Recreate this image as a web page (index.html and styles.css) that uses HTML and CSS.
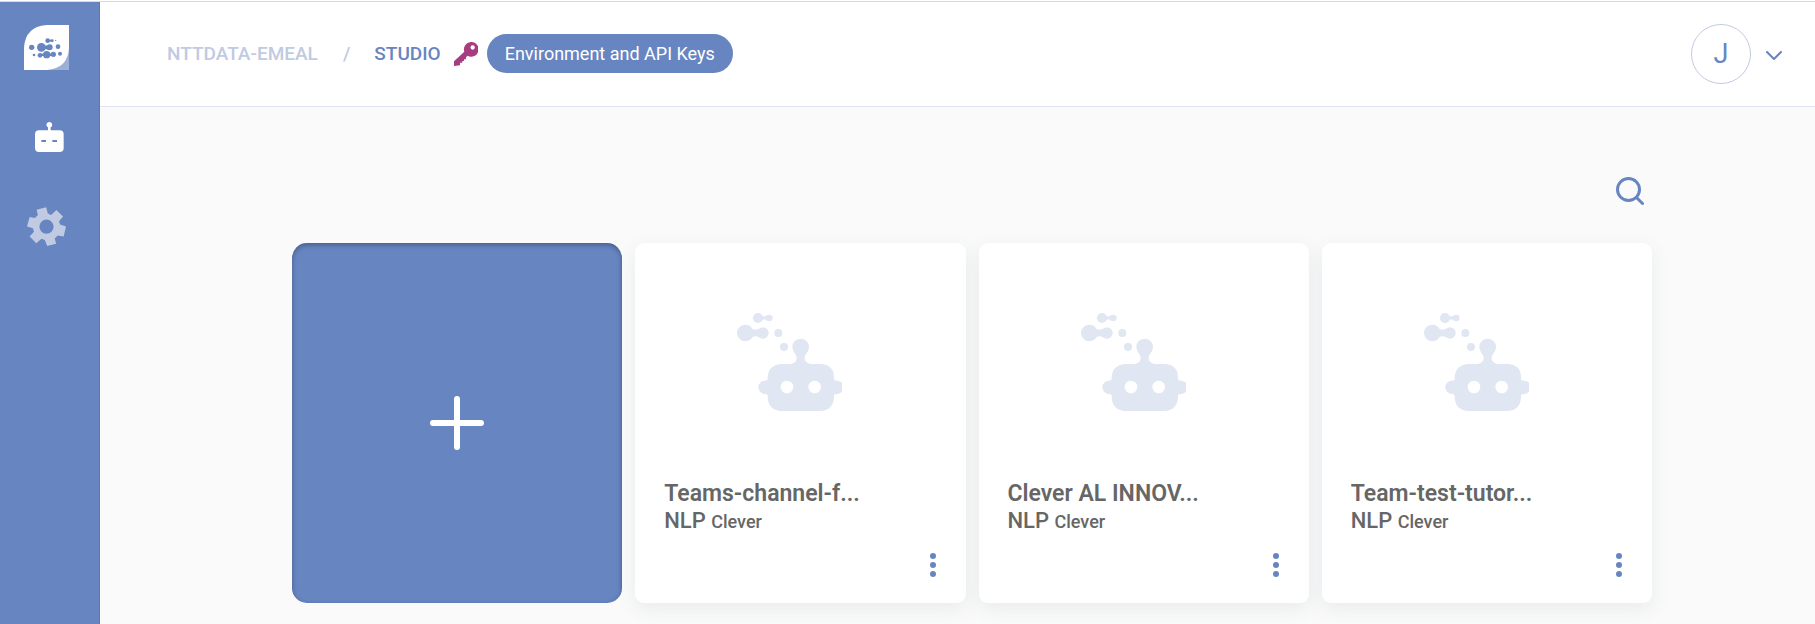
FILE: index.html
```html
<!DOCTYPE html>
<html lang="en">
<head>
<meta charset="utf-8">
<title>Studio</title>
<link rel="stylesheet" href="styles.css">
</head>
<body>
<svg class="defs" aria-hidden="true">
  <symbol id="bot" viewBox="51 69 315 294">
    <circle cx="114" cy="84" r="15"/><circle cx="148" cy="84" r="10"/>
    <path d="M120 73C127 82 135 80 143 76V92C135 88 127 86 120 95Z"/>
    <circle cx="76" cy="129" r="25"/><circle cx="129" cy="129" r="17"/>
    <path d="M88 108C98 124 110 120 121 115V143C110 138 98 134 88 150Z"/>
    <circle cx="175" cy="129" r="12"/><circle cx="192" cy="171" r="12"/>
    <circle cx="242" cy="171" r="25"/>
    <path d="M220 182C230 197 233 204 227 214Q222 222 212 222H272Q262 222 257 214C251 204 254 197 264 182Z"/>
    <path fill-rule="evenodd" d="M182 222H304Q342 226 342 262V268Q344 272 351 272A20 20 0 0 1 351 312Q344 312 342 316V322Q340 360 304 363H182Q145 360 143 322V316Q142 312 135 312A20 20 0 0 1 135 272Q142 272 143 268V262Q145 226 182 222ZM201 272A19 19 0 1 0 201 310A19 19 0 1 0 201 272ZM284 272A19 19 0 1 0 284 310A19 19 0 1 0 284 272Z"/>
  </symbol>
  <symbol id="dots" viewBox="0 0 6 24">
    <circle cx="3" cy="3" r="3"/><circle cx="3" cy="12" r="3"/><circle cx="3" cy="21" r="3"/>
  </symbol>
</svg>
<div class="app">
  <nav class="sidebar" aria-label="Main">
    <a class="side-link" href="#" aria-label="Home">
      <svg class="logo" viewBox="72 75 135 135">
        <path fill="#9cafd7" d="M140 140H207V210H140Z"/>
        <path fill="#fff" d="M72 210V143Q76 80 139 75H207V145Q203 206 140 210Z"/>
        <g fill="#6785c1">
          <circle cx="95" cy="142" r="8"/><circle cx="124" cy="142" r="13"/><circle cx="149" cy="142" r="9"/><circle cx="174" cy="140" r="7"/>
          <path d="M128 134Q137 139 148 134V150Q137 145 128 150Z"/>
          <circle cx="143" cy="122" r="7"/><circle cx="157" cy="122" r="4"/><circle cx="167" cy="121" r="2"/><path d="M145 119H157V125H145Z"/>
          <circle cx="102" cy="165" r="4"/><circle cx="120" cy="166" r="7"/><circle cx="140" cy="164" r="11"/><circle cx="160" cy="163" r="8"/><circle cx="180" cy="161" r="6"/>
          <path d="M120 161H160V168H120Z"/>
        </g>
      </svg>
    </a>
    <a class="side-link" href="#" aria-label="Bots">
      <svg class="side-bot" viewBox="105 66 87 90">
        <path fill="#fff" fill-rule="evenodd" d="M144 82A8.500 8.500 0 1 1 152 82V91H179Q191 91 191 103V144Q191 156 179 156H117Q105 156 105 144V103Q105 91 117 91H144ZM124 120V126H138V120ZM157 120V126H171V120Z"/>
      </svg>
    </a>
    <a class="side-link" href="#" aria-label="Settings">
      <svg class="side-gear" viewBox="80 322 118 118">
        <path fill="#c0cae2" fill-rule="evenodd" d="M109 330L138 323L143 342L153 346L169 331L189 351L177 365L180 375L198 381L191 411L173 408L164 417L168 433L141 440L134 422L124 418L108 432L88 411L101 397L98 386L80 381L88 352L104 355L113 346ZM139 360A21.500 21.500 0 1 0 139 403A21.500 21.500 0 1 0 139 360Z"/>
      </svg>
    </a>
  </nav>
  <div class="page">
    <header class="topbar">
      <div class="crumbs">
        <a class="crumb" href="#">NTTDATA-EMEAL</a>
        <span class="slash">/</span>
        <a class="crumb current" href="#">STUDIO</a>
        <svg class="key" viewBox="0 0 72 72">
          <path fill="#a83c80" fill-rule="evenodd" d="M50 0A22 22 0 1 1 41 41L36 46V52H30V57H25V62H18V70L0 72V58L31 29A22 22 0 0 1 50 0ZM56 10A6.500 6.500 0 1 0 56 23A6.500 6.500 0 1 0 56 10Z"/>
        </svg>
        <button class="pill" type="button">Environment and API Keys</button>
      </div>
      <button class="account" type="button">
        <span class="avatar">J</span>
        <svg class="chevron" viewBox="0 0 16 10"><path d="M1 1L8 8L15 1"/></svg>
      </button>
    </header>
    <main class="content">
      <div class="tools">
        <button class="search" type="button" aria-label="Search">
          <svg viewBox="0 0 28 28"><circle cx="12.500" cy="12.500" r="11"/><path d="M20.500 20.500L26.500 26.500"/></svg>
        </button>
      </div>
      <div class="grid">
        <button class="add" type="button" aria-label="Add bot">
          <svg viewBox="0 0 54 54"><path d="M27 3V51M3 27H51"/></svg>
        </button>
        <article class="card">
          <svg class="bot"><use href="#bot"/></svg>
          <h2 class="name">Teams-channel-f...</h2>
          <p class="meta">NLP <small>Clever</small></p>
          <button class="more" type="button" aria-label="More"><svg><use href="#dots"/></svg></button>
        </article>
        <article class="card">
          <svg class="bot"><use href="#bot"/></svg>
          <h2 class="name">Clever AL INNOV...</h2>
          <p class="meta">NLP <small>Clever</small></p>
          <button class="more" type="button" aria-label="More"><svg><use href="#dots"/></svg></button>
        </article>
        <article class="card">
          <svg class="bot"><use href="#bot"/></svg>
          <h2 class="name">Team-test-tutor...</h2>
          <p class="meta">NLP <small>Clever</small></p>
          <button class="more" type="button" aria-label="More"><svg><use href="#dots"/></svg></button>
        </article>
      </div>
    </main>
  </div>
</div>
</body>
</html>
```
FILE: styles.css
```css
* { box-sizing: border-box; }
body { margin: 0; font-family: Roboto, sans-serif; color: #666; background: #fafafa; }
button { font: inherit; border: 0; padding: 0; background: none; cursor: pointer; }
a { text-decoration: none; }
svg { display: block; }
.defs { position: absolute; width: 0; height: 0; }
.app { display: flex; min-height: 100vh; border-top: 1px solid #fff; box-shadow: inset 0 1px #d9dade; padding-top: 1px; }
.sidebar { width: 100px; flex: none; display: flex; flex-direction: column; background: #6785c1; border-right: 1px solid #5b78b2; padding: 23px 0 0 24px; }
.side-link { display: block; }
.logo { width: 45px; height: 45px; }
.side-bot { width: 29px; height: 30px; margin: 52px 0 0 11px; }
.side-gear { width: 39px; height: 39px; margin: 55px 0 0 3px; }
.page { flex: 1; min-width: 0; }
.topbar { display: flex; align-items: center; justify-content: space-between; height: 105px; padding: 0 33px 0 67px; background: #fff; border-bottom: 1px solid #dfe5f2; }
.crumbs { display: flex; align-items: center; padding-bottom: 1px; }
.crumb, .slash { font-size: 19px; line-height: 24px; font-weight: 500; color: #c0cae2; }
.slash { margin: 0 24px 0 25px; }
.current { color: #6785c1; }
.key { width: 24px; height: 24px; margin: 0 9px 0 13px; }
.pill { height: 39px; padding: 0 18px; border-radius: 20px; background: #6785c1; color: #fff; font-size: 18px; }
.account { display: flex; align-items: center; gap: 15px; }
.avatar { width: 60px; height: 60px; border: 1px solid #c0cae2; border-radius: 50%; font-size: 27px; line-height: 58px; color: #6785c1; }
.chevron { width: 16px; height: 10px; margin-top: 4px; fill: none; stroke: #6785c1; stroke-width: 2; stroke-linecap: round; stroke-linejoin: round; }
.content { padding: 70px 163px 20px 192px; }
.tools { display: flex; justify-content: flex-end; padding-right: 8px; margin-bottom: 38px; }
.search svg { width: 28px; height: 28px; fill: none; stroke: #6785c1; stroke-width: 3; stroke-linecap: round; }
.grid { display: grid; grid-template-columns: repeat(4, 1fr); gap: 13px; }
.add { display: flex; align-items: center; justify-content: center; min-height: 360px; border-radius: 15px; background: #6785c1; box-shadow: inset 0 2px 5px rgba(0, 20, 40, .35); }
.add svg { width: 54px; height: 54px; stroke: #fff; stroke-width: 6; stroke-linecap: round; }
.card { display: flex; flex-direction: column; padding: 70px 30px 26px 29px; border-radius: 9px; background: #fff; box-shadow: 0 6px 20px rgba(60, 85, 95, .09); }
.bot { width: 105px; height: 98px; margin: 0 0 69px 73px; fill: #e0e6f2; }
.name { margin: 0; font-size: 23px; line-height: 27px; font-weight: 600; }
.meta { margin: 0; font-size: 22px; line-height: 27px; font-weight: 500; }
.meta small { font-size: 18px; }
.more { align-self: flex-end; margin-top: auto; }
.more svg { width: 6px; height: 24px; fill: #6785c1; }
```
